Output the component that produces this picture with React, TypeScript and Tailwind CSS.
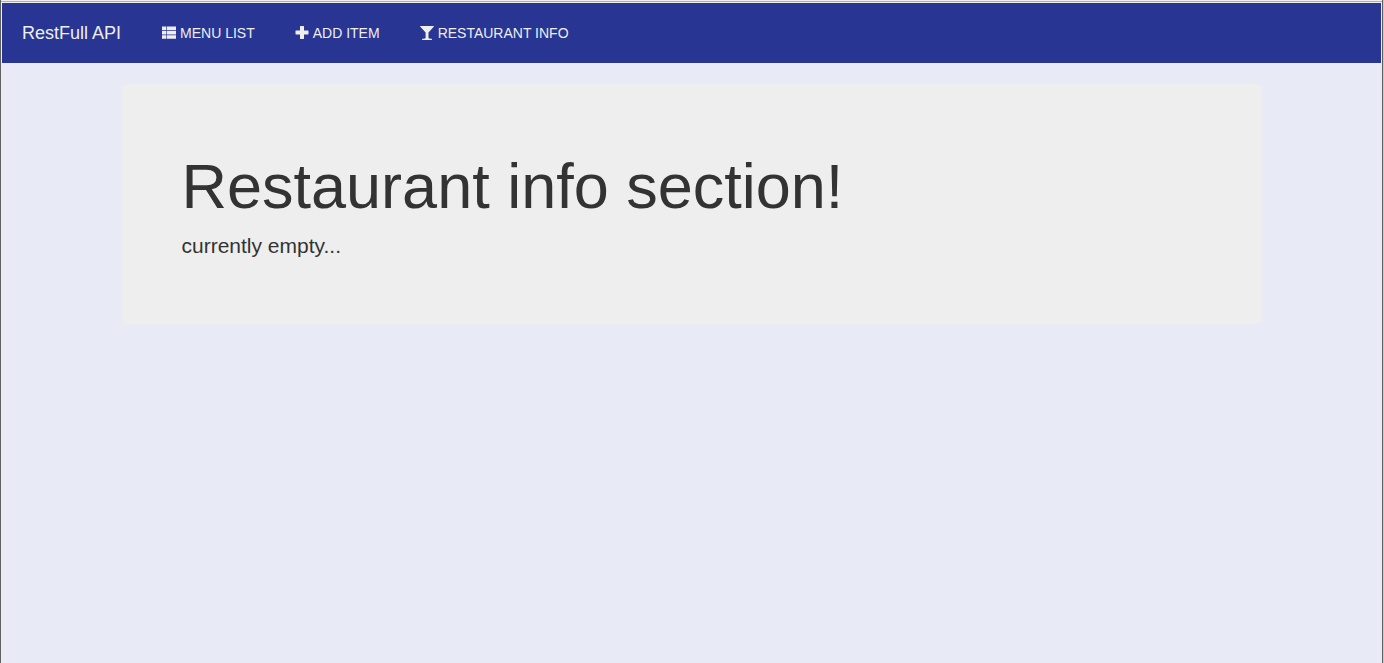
import type { ReactNode } from "react";

function ListIcon() {
  return (
    <svg className="h-[14px] w-[14px] fill-current" viewBox="0 0 14 14" aria-hidden="true">
      <path d="M0 .5h4.400v3.500H0zM5 .5h9v3.500H5zM0 4.800h4.400v3.600H0zM5 4.800h9v3.600H5zM0 9.200h4.400v3.600H0zM5 9.200h9v3.600H5z" />
    </svg>
  );
}

function PlusIcon() {
  return (
    <svg className="h-[14px] w-[14px] fill-current" viewBox="0 0 14 14" aria-hidden="true">
      <path d="M5.400 0h3.200q.4 0 .4.400V4.500h4.100q.4 0 .4.400v3.200q0 .4-.4.400H9v4.100q0 .4-.4.400H5.400q-.4 0-.4-.4V8.500H.9q-.4 0-.4-.4V4.900q0-.4.400-.4H5V.4q0-.4.400-.4z" />
    </svg>
  );
}

function GlassIcon() {
  return (
    <svg className="h-[14px] w-[14px] fill-current" viewBox="0 0 14 14" aria-hidden="true">
      <path d="M.3 0h13.400q.4.300 0 .8L8.500 6.500V12q.1.400.8.500l2.200.3q.6.200.6 1.200H2q0-1 .600-1.200l2.200-.3q.7-.1.800-.5V6.500L.3.800Q-.1.300.3 0z" />
    </svg>
  );
}

function NavItem({ icon, children }: { icon: ReactNode; children: ReactNode }) {
  return (
    <li>
      <a href="#" className="flex items-center gap-1 px-5 py-5 text-sm leading-5 uppercase">
        {icon}
        <span>{children}</span>
      </a>
    </li>
  );
}

export default function App() {
  return (
    <div className="flex min-h-screen flex-col border-r border-r-[#c8c8c8] bg-[#e8eaf6] font-['Liberation_Sans',Arial,sans-serif] text-[#333]">
      <div className="flex flex-1 flex-col border-x border-x-[#606060]">
        <div className="h-px bg-[#eeeeee]" />
        <div className="h-px bg-[#b0b0b0]" />
        <header className="border-x border-t border-[#eeeeee]">
          <nav className="flex flex-wrap items-center gap-px bg-[#283593] text-[#eeeeee]">
            <a href="#" className="px-5 py-5 text-lg leading-5">
              RestFull API
            </a>
            <ul className="flex flex-wrap">
              <NavItem icon={<ListIcon />}>Menu list</NavItem>
              <NavItem icon={<PlusIcon />}>Add item</NavItem>
              <NavItem icon={<GlassIcon />}>Restaurant info</NavItem>
            </ul>
          </nav>
        </header>
        <main className="mx-auto mt-[21px] w-full max-w-[1140px] rounded-md bg-[#eeeeee] px-[60px] pt-[68px] pb-[63px]">
          <h1 className="text-[63px] leading-[69px]">Restaurant info section!</h1>
          <p className="mt-[10px] text-[21px] leading-[30px]">currently empty...</p>
        </main>
      </div>
    </div>
  );
}
